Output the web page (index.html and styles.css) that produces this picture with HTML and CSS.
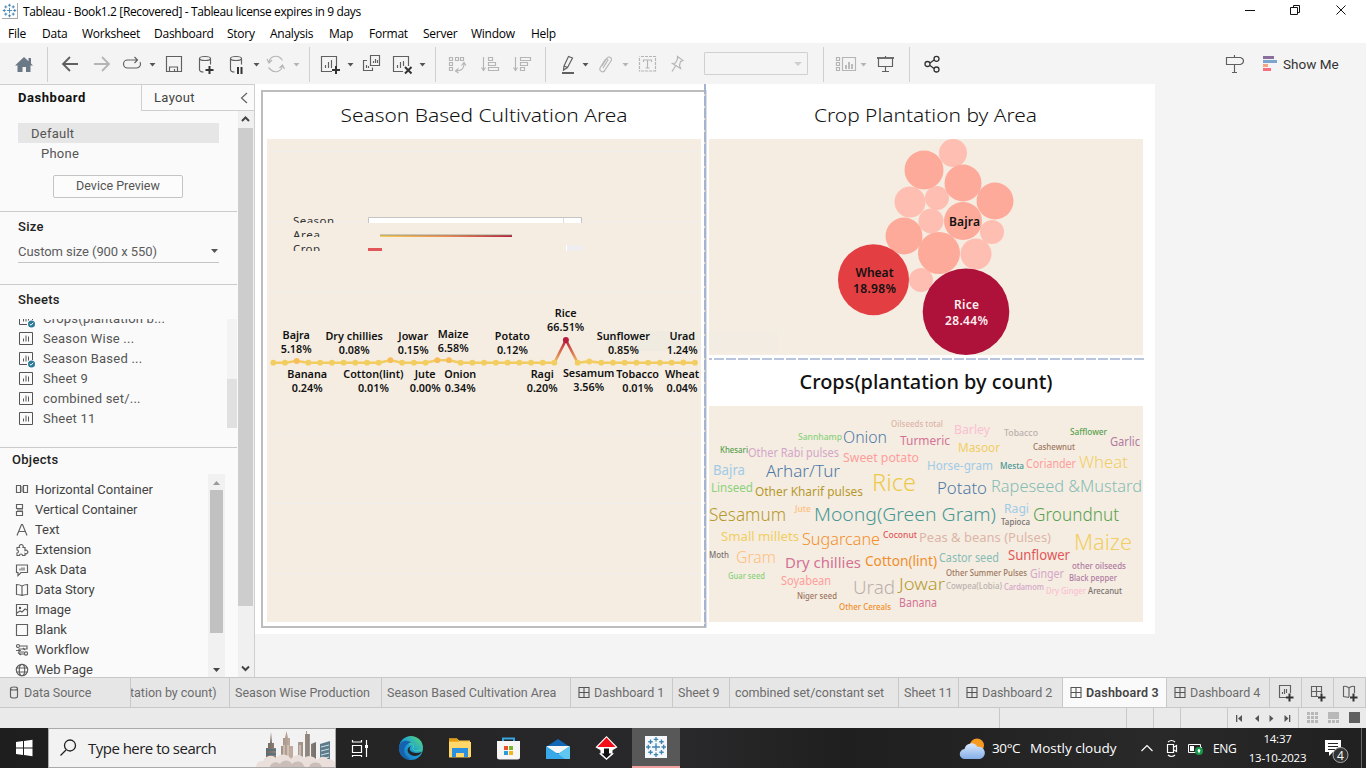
FILE: index.html
```html
<!DOCTYPE html>
<html lang="en">
<head>
<meta charset="utf-8">
<title>Tableau - Book1.2</title>
<link rel="stylesheet" href="styles.css">
</head>
<body>
<svg width="0" height="0" class="defs">
  <defs>
    <symbol id="logo" viewBox="0 0 20 20"><path d="M10 6.5v7M6.5 10h7M10 1v4M8 3h4M10 15v4M8 17h4M1 10h4M3 8v4M15 10h4M17 8v4M5 3.2v4M3 5.2h4M15 3.2v4M13 5.2h4M5 12.8v4M3 14.8h4M15 12.8v4M13 14.8h4" fill="none" stroke="#3f83b0" stroke-width="1.2"/></symbol>
    <symbol id="sheet" viewBox="0 0 14 14"><path d="M.5.5h13v12h-13zM4.500 9.500v-3M7 9.500v-6M9.500 9.500v-5" fill="none" stroke="#555"/></symbol>
    <symbol id="used" viewBox="0 0 17 16"><path d="M8 12.500H.5V.5h13V8M4.500 9.500v-3M7 9.500v-6M9.500 8.500v-4" fill="none" stroke="#555"/><circle cx="12.500" cy="12" r="3.500" fill="#2c7a9b"/><path d="M10.800 12l1.200 1.200 2.200-2.400" fill="none" stroke="#fff"/></symbol>
    <symbol id="dash" viewBox="0 0 12 12"><path d="M1 .5h10v10H1zM1 5.500h10M6 .5v10" fill="none" stroke="#555" stroke-width="1.100"/></symbol>
    <linearGradient id="heat"><stop offset="0" stop-color="#f4cf5b"/><stop offset=".5" stop-color="#ee8c54"/><stop offset="1" stop-color="#b71d3e"/></linearGradient>
    <linearGradient id="peak" x2="0" y2="1"><stop offset="0" stop-color="#b71d3e"/><stop offset=".5" stop-color="#d96d4d"/><stop offset="1" stop-color="#efc368"/></linearGradient>
    <linearGradient id="edge" x1="0" y1="1" x2="1" y2="0"><stop offset="0" stop-color="#1667b8"/><stop offset=".5" stop-color="#1d9fd8"/><stop offset="1" stop-color="#5ee06c"/></linearGradient>
    <linearGradient id="cloudfill" x2="0" y2="1"><stop offset="0" stop-color="#d9e8fb"/><stop offset="1" stop-color="#85aee8"/></linearGradient>
    <linearGradient id="tower" x2="1"><stop offset="0" stop-color="#6f665f"/><stop offset=".5" stop-color="#c2ada0"/><stop offset="1" stop-color="#75706d"/></linearGradient>
  </defs>
</svg>

<header class="titlebar">
  <svg class="app-logo" viewBox="0 0 20 20"><use href="#logo"/></svg>
  <span class="app-title">Tableau - Book1.2 [Recovered] - Tableau license expires in 9 days</span>
  <svg class="window-buttons" viewBox="1230 0 136 23"><path d="M1245 10.500h10M1293.500 7.500v-2h6v7h-2M1290.500 7.500h7v7h-7zM1336.500 5.500l9 9M1345.500 5.500l-9 9" fill="none" stroke="#111"/></svg>
</header>

<nav class="menubar">
  <span class="m1">File</span><span class="m2">Data</span><span class="m3">Worksheet</span><span class="m4">Dashboard</span><span class="m5">Story</span><span class="m6">Analysis</span><span class="m7">Map</span><span class="m8">Format</span><span class="m9">Server</span><span class="m10">Window</span><span>Help</span>
</nav>

<div class="toolbar">
  <svg class="sep" width="48" height="41" viewBox="0 43 48 41"><path d="M15 65.500L24 57l4.500 4.200V58H31v5.600l2 1.900h-2.500V72H26v-5h-3.500v5h-5v-6.500z" fill="#6b7886"/></svg>
  <svg width="70" height="41" viewBox="48 43 70 41"><path d="M78 64H63M70 57l-7 7 7 7" class="ic bold"/><path d="M94 64h15M102 57l7 7-7 7" class="ic bold off"/></svg>
  <svg width="43" height="41" viewBox="118 43 43 41"><path d="M131 60h-3.500a4 4 0 0 0 0 8h9a4 4 0 0 0 3.500-6M130 60h7M134.500 57l3 3-3 3" class="ic"/><path d="M149.500 63h6l-3 3.500z" class="caret"/></svg>
  <svg width="29" height="41" viewBox="161 43 29 41"><path d="M166.500 56.500h15v15h-15zM169.500 71v-4h8v4M174.500 71v-2" class="ic"/></svg>
  <svg width="72" height="41" viewBox="190 43 72 41"><path d="M199.500 58.500v11q0 2.500 4 2.500M210.500 58.500v6" class="ic"/><ellipse cx="205" cy="58.500" rx="5.500" ry="2" class="ic"/><path d="M209.500 66v8M205.500 70h8" class="ic plus"/><path d="M230.500 58.500v11q0 2.500 4 2.500M241.500 58.500v6" class="ic"/><ellipse cx="236" cy="58.500" rx="5.500" ry="2" class="ic"/><path d="M238 67v7M241.500 67v7" class="ic plus"/><path d="M253.500 63h6l-3 3.500z" class="caret"/></svg>
  <svg class="sep" width="48" height="41" viewBox="262 43 48 41"><path d="M269 62a7 7 0 0 1 12-3.500l1.500 2M282.500 66a7 7 0 0 1-12 3.500l-2-2M267 59l2 4 3-3M284.500 69l-2-4-3 3" class="ic off"/><path d="M293.500 63h6l-3 3.500z" class="caret off-fill"/></svg>
  <svg class="sep" width="126" height="41" viewBox="310 43 126 41"><path d="M332 71.500h-10.500v-15h15V66M325.500 68v-3M328.500 68v-6M331.500 68v-8" class="ic"/><path d="M336 66v8M332 70h8" class="ic plus"/><path d="M347.500 63h6l-3 3.500z" class="caret"/><path d="M371.500 55.500h8v10h-9v-10zM367 60.500h-3.500v10h9v-3M373.500 63v-2M375.500 63v-4M377.500 63v-3M366.500 68v-3M368.500 68v-2" class="ic"/><path d="M403 71.500h-9.500v-15h15V66M397.500 68v-3M400.500 68v-6M403.500 66v-5" class="ic"/><path d="M405 67l6.500 6.500M411.500 67l-6.500 6.500" class="ic plus"/><path d="M419.500 63h6l-3 3.500z" class="caret"/></svg>
  <svg class="sep" width="110" height="41" viewBox="436 43 110 41"><path d="M449.500 57.500h3v3h-3zM455.500 57.500h3v3h-3zM460.500 57.500h3v3h-3zM449.500 62.500h3v3h-3zM449.500 67.500h3v3h-3zM464 64q0 7-8 7M461.500 65.500l2.500-3 2 3M458.500 68.500l-3 2.500 3 2M483.500 57v12M481.500 67.500l2 3 2-3M488.500 57.500h4v3h-4zM488.500 62.500h7v3h-7zM488.500 67.500h10v3h-10zM515.500 57v12M513.500 67.500l2 3 2-3M520.500 57.500h10v3h-10zM520.500 62.500h7v3h-7zM520.500 67.500h4v3h-4z" class="ic off"/></svg>
  <svg width="158" height="41" viewBox="546 43 158 41"><path d="M564 66l4.500-9.500 4 1.500-5 9.500-4 2.500zM564 66l3.500 1.500" class="ic"/><path d="M562 73h12" class="ic plus2"/><path d="M582.500 63h6l-3 3.500z" class="caret"/><path d="M602 66l5-8a2.500 2.500 0 0 1 4 3l-6 9a2.500 2.500 0 0 1-5-2l5-8q2-2 3 0l-5 8M640 56.500h15.500v14.500h-16V56.500" class="ic off"/><path d="M643.500 62v-2h8v2M647.500 60v8M645.500 68h4" class="ic off"/><path d="M640 56.500h15M640 71h15M639.500 57v14M655.500 57v14" stroke="#f4f4f4" stroke-width="1.500" stroke-dasharray="1 3"/><path d="M622.500 63h6l-3 3.500z" class="caret off-fill"/><path d="M677.500 56.500l5.500 4-2.500 1-1 4 1 3-8-5 3-.5 2-4zM675.500 66l-3.500 5.500" class="ic off"/></svg>
  <div class="combo"><i></i></div>
  <svg class="sep" width="16" height="41"></svg>
  <svg class="sep" width="86" height="41" viewBox="824 43 86 41"><path d="M836.500 57.500h3v3h-3zM836.500 62.500h3v3h-3zM836.500 67.500h3v3h-3zM842.500 57.500h13v13h-13z" class="ic off"/><path d="M846 69v-4M849 69v-7M852 69v-5" class="ic off bold"/><path d="M860.500 63h6l-3 3.500z" class="caret off-fill"/><path d="M878.500 58v8.500h14V58M885.500 56v2M885.500 67v4M882 71.500h7" class="ic"/><path d="M877 58h17" class="ic bold"/></svg>
  <svg width="60" height="41" viewBox="910 43 60 41"><path d="M930 63l4-3M930 65.500l4 3" class="ic dark"/><circle cx="927.500" cy="64" r="2.500" class="ic dark"/><circle cx="936.500" cy="58.800" r="2.500" class="ic dark"/><circle cx="936.500" cy="69.500" r="2.500" class="ic dark"/></svg>
  <svg class="push" width="62" height="41" viewBox="1220 43 62 41"><path d="M1226.500 57.500h14q3 1 3 3.500t-3 3.500h-14zM1234.500 55v2M1234.500 65v7M1232 72.500h5" class="ic"/><path d="M1263 56h11v3h-11z" fill="#8a6f9c"/><path d="M1263 60h14v3h-14z" fill="#7da3cf"/><path d="M1263 64h5v3h-5z" fill="#f3a683"/><path d="M1263 68h8v3h-8z" fill="#f76e7f"/></svg>
  <span class="showme">Show Me</span>
</div>

<div class="workspace">
  <aside class="side">
    <div class="side-tabs"><b>Dashboard</b><div class="layout-tab"><span>Layout</span><svg width="8" height="12" viewBox="0 0 8 12"><path d="M7 1L1.500 6 7 11" class="ic"/></svg></div></div>
    <div class="side-body">
      <div class="side-main">
        <section class="devices">
          <div class="default">Default</div>
          <div class="phone">Phone</div>
          <div class="preview">Device Preview</div>
        </section>
        <section class="size">
          <h3>Size</h3>
          <div class="select"><span>Custom size (900 x 550)</span><svg width="8" height="5"><path d="M0 0h7L3.500 4z" fill="#555"/></svg></div>
        </section>
        <section class="sheets">
          <h3>Sheets</h3>
          <div class="sheet-area">
            <ul>
              <li><svg width="17" height="16"><use href="#used"/></svg>Crops(plantation b...</li>
              <li><svg width="14" height="14"><use href="#sheet"/></svg>Season Wise ...</li>
              <li><svg width="17" height="16"><use href="#used"/></svg>Season Based ...</li>
              <li><svg width="14" height="14"><use href="#sheet"/></svg>Sheet 9</li>
              <li><svg width="14" height="14"><use href="#sheet"/></svg>combined set/...</li>
              <li><svg width="14" height="14"><use href="#sheet"/></svg>Sheet 11</li>
            </ul>
            <div class="mini-scroll"><i></i></div>
          </div>
        </section>
        <section class="objects">
          <h3>Objects</h3>
          <div class="object-area">
            <ul>
              <li><svg viewBox="0 0 14 14"><path d="M1.500 2.500h4v7h-4zM8.500 2.500h4v7h-4z" class="ic"/><path d="M6 3h2v6H6z" fill="#aaa"/></svg>Horizontal Container</li>
              <li><svg viewBox="0 0 14 14"><path d="M1.500 1.500h6v4h-6zM1.500 8.500h6v4h-6z" class="ic"/><path d="M2 6h6v2H2z" fill="#aaa"/></svg>Vertical Container</li>
              <li><svg viewBox="0 0 14 14"><path d="M2 12.500L6.500 1.500h1L12 12.500M4 8.500h6" class="ic"/></svg>Text</li>
              <li><svg viewBox="0 0 14 14"><path d="M2 4.500h2.500a2 2 0 1 1 3.500 0h2v3a1.800 1.800 0 1 1 0 3v2H7.500a1.500 1.500 0 0 0-3 0H2V10a1.500 1.500 0 1 0 0-3z" class="ic"/></svg>Extension</li>
              <li><svg viewBox="0 0 14 14"><path d="M1.500 2h11v7.500H6l-3 3v-3H1.500z" class="ic"/><path d="M5 7.500v-2M7 7.500v-3M9 7.500v-3" class="ic"/></svg>Ask Data</li>
              <li><svg viewBox="0 0 14 14"><path d="M1.500 1.500q3 0 5.500 1.500 2.500-1.500 5.500-1.500v10q-3 0-5.500 1-2.500-1-5.500-1zM7 3v9" class="ic"/></svg>Data Story</li>
              <li><svg viewBox="0 0 14 14"><path d="M1.500 1.500h11v11h-11zM2 10l3-2 2 1 3-3 2 1" class="ic"/><circle cx="5" cy="5" r="1.200" fill="#555"/></svg>Image</li>
              <li><svg viewBox="0 0 14 14"><path d="M1.500 1.500h11v11h-11z" class="ic"/></svg>Blank</li>
              <li><svg viewBox="0 0 14 14"><path d="M5 3h7v3H4v3h5M9 11H4" class="ic"/><circle cx="3" cy="3" r="1.500" class="ic"/><circle cx="11" cy="10.500" r="1.600" class="ic"/><path d="M1 7.500h5M3 9.500l3 2.500M8 5l2 2" class="ic"/></svg>Workflow</li>
              <li><svg viewBox="0 0 14 14"><circle cx="7" cy="7" r="5.700" class="ic"/><ellipse cx="7" cy="7" rx="2.700" ry="5.700" class="ic"/><path d="M1 5h12M1 9h12" class="ic"/></svg>Web Page</li>
            </ul>
            <div class="obj-scroll"><svg width="17" height="16"><path d="M5 11h7L8.500 7z" fill="#999"/></svg><i></i><svg width="17" height="17"><path d="M5 7h7l-3.500 4z" fill="#444"/></svg></div>
          </div>
        </section>
      </div>
      <div class="main-scroll"><svg width="15" height="17"><path d="M4 10l3.500-3.500L11 10" fill="none" stroke="#444" stroke-width="2"/></svg><i></i><svg width="15" height="17"><path d="M4 6.500l3.500 3.500L11 6.500" fill="none" stroke="#444" stroke-width="2"/></svg></div>
    </div>
  </aside>

  <main class="canvas">
    <div class="dashboard">
      <svg class="zone-left" width="454" height="550" viewBox="255 84 454 550">
        <path d="M262 91h443.500v536H262z" fill="#fff" stroke="#bdbdbd" stroke-width="2"/>
        <path d="M705 84v543" stroke="#a3b3d0" stroke-width="2" stroke-dasharray="10 2"/>
        <text x="340.500" y="122" textLength="287" lengthAdjust="spacingAndGlyphs" class="ztitle">Season Based Cultivation Area</text>
        <path d="M267 139h434v483H267z" fill="#f5ede2"/>
        <path d="M268 151.500h433M268 221.500h433M268 292.500h433M268 362.500h433M268 433.500h433M268 503.500h433M268 573.500h433" stroke="#f1efed"/>
        <path d="M607 331h94v20h-94z" fill="#eeeae0" opacity=".7"/>
        <svg x="290" y="217" width="300" height="6" viewBox="290 217 300 6"><text x="293" y="225" textLength="41" class="legend">Season</text><path d="M368.500 230v-12.500h213V230z" fill="#fff" stroke="#c4c4c4"/><path d="M563.500 218v6" stroke="#ddd"/></svg>
        <svg x="290" y="231" width="300" height="6" viewBox="290 231 300 6"><text x="293" y="239" textLength="27" class="legend">Area</text><path d="M380 235h132v2H380z" fill="url(#heat)"/><path d="M380 235h132" stroke="#8d8a75" stroke-width=".8"/></svg>
        <svg x="290" y="245" width="300" height="6" viewBox="290 245 300 6"><text x="293" y="253" textLength="27" class="legend">Crop</text><path d="M368 248h14v3h-14z" fill="#e15759"/><path d="M567 245h16v6h-16z" fill="#eeeef0"/><path d="M566.500 245v6" stroke="#fff"/></svg>
        <g fill="none" stroke-width="2.600" stroke-linejoin="round">
          <path d="M273.300 362.700h11.700l11.700-1.700 11.700 1.700h70.300l11.700-2.500 11.700 2.500h23.400l11.700-2.500h11.700l11.700 2.500h94M577.600 362.700l11.700-1.300 11.700 1.300h94" stroke="#f3cb61"/>
          <path d="M554.500 362.700L565.900 340l11.700 22.700" stroke="url(#peak)"/>
        </g>
        <path d="M273.300 362.700h.01M285 362.700h.01M308.400 362.700h.01M320.100 362.700h.01M331.900 362.700h.01M343.600 362.700h.01M355.300 362.700h.01M367 362.700h.01M378.700 362.700h.01M402.100 362.700h.01M413.900 362.700h.01M425.600 362.700h.01M460.700 362.700h.01M472.400 362.700h.01M484.100 362.700h.01M495.900 362.700h.01M507.600 362.700h.01M519.300 362.700h.01M531 362.700h.01M542.700 362.700h.01M554.400 362.700h.01M577.600 362.700h.01M589.300 361.500h.01M601.300 362.700h.01M613 362.700h.01M624.700 362.700h.01M636.400 362.700h.01M648.100 362.700h.01M659.900 362.700h.01M671.600 362.700h.01M683.300 362.500h.01M695 362.700h.01" stroke="#f2ce61" stroke-width="5.800" stroke-linecap="round"/>
        <path d="M296.700 361h.01M390.400 360.200h.01M437.300 360.200h.01M449 360.200h.01" stroke="#f7bd59" stroke-width="5.800" stroke-linecap="round"/>
        <circle cx="565.900" cy="340" r="3" fill="#b71d3e"/>
        <g class="mark" transform="translate(-.3 -.7)">
          <text x="296.500" y="339.500">Bajra</text><text x="296.500" y="354">5.18%</text>
          <text x="354.500" y="340.500">Dry chillies</text><text x="354.500" y="355">0.08%</text>
          <text x="413.500" y="340.500">Jowar</text><text x="413.500" y="355">0.15%</text>
          <text x="453.500" y="338.500">Maize</text><text x="453.500" y="353">6.58%</text>
          <text x="512.700" y="340.500">Potato</text><text x="512.700" y="355">0.12%</text>
          <text x="566" y="317.500">Rice</text><text x="566" y="332">66.51%</text>
          <text x="623.700" y="340.500">Sunflower</text><text x="623.700" y="355">0.85%</text>
          <text x="682.500" y="340.500">Urad</text><text x="682.500" y="355">1.24%</text>
          <text x="307.500" y="378.500">Banana</text><text x="307.500" y="393">0.24%</text>
          <text x="373.700" y="378.500">Cotton(lint)</text><text x="373.700" y="393">0.01%</text>
          <text x="425.500" y="378.500">Jute</text><text x="425.500" y="393">0.00%</text>
          <text x="460.500" y="378.500">Onion</text><text x="460.500" y="393">0.34%</text>
          <text x="542.500" y="378.500">Ragi</text><text x="542.500" y="393">0.20%</text>
          <text x="589" y="377.500">Sesamum</text><text x="589" y="392">3.56%</text>
          <text x="638" y="378.500">Tobacco</text><text x="638" y="393">0.01%</text>
          <text x="682.300" y="378.500">Wheat</text><text x="682.300" y="393">0.04%</text>
        </g>
      </svg>
      <div class="zone-right">
        <svg width="446" height="275" viewBox="709 84 446 275">
          <text x="814" y="122" textLength="223" lengthAdjust="spacingAndGlyphs" class="ztitle">Crop Plantation by Area</text>
          <path d="M709 139h434v216H709z" fill="#f5ede2"/>
          <path d="M709 331h69v20h-69z" fill="#f3ece2"/>
          <g fill="#ffbeb2"><circle cx="953" cy="153" r="14"/><circle cx="910" cy="202" r="15.500"/><circle cx="937" cy="198" r="12"/><circle cx="931" cy="221" r="12.500"/><circle cx="992" cy="232" r="12"/><circle cx="976" cy="254" r="15.500"/><circle cx="921" cy="280" r="12"/></g>
          <g fill="#feaa9a"><circle cx="924" cy="170" r="19.500"/><circle cx="963" cy="183" r="18.500"/><circle cx="995" cy="201" r="18.500"/><circle cx="963" cy="221" r="19"/><circle cx="904" cy="236" r="18.500"/><circle cx="939" cy="253" r="21"/></g>
          <circle cx="873.500" cy="279.700" r="35.500" fill="#e33f43"/><circle cx="966" cy="311.700" r="43.300" fill="#ae123a"/>
          <g class="bubble"><text x="964.500" y="226" textLength="31">Bajra</text><text x="874.500" y="277" textLength="38">Wheat</text><text x="874.500" y="293" textLength="43">18.98%</text><text x="966.500" y="309" textLength="25" class="lite">Rice</text><text x="966.500" y="325" textLength="43" class="lite">28.44%</text></g>
          <path d="M702 358.500h444" stroke="#b9c6de" stroke-dasharray="10 2"/>
        </svg>
        <svg width="446" height="275" viewBox="709 359 446 275">
          <path d="M702 359.500h444" stroke="#b9c6de" stroke-dasharray="10 2"/>
          <text x="799.500" y="389" textLength="253" lengthAdjust="spacingAndGlyphs" class="ztitle strong">Crops(plantation by count)</text>
          <path d="M709 406h434v216H709z" fill="#f5ede2"/>
          <g id="words" class="words"></g>
        </svg>
      </div>
    </div>
  </main>
</div>

<div class="tabs">
  <div class="t0"><svg width="10" height="13" viewBox="0 0 10 13"><path d="M1.500 2.500v8q0 1.500 3.500 1.500t3.500-1.500v-8q0-1.500-3.500-1.500T1.500 2.500t3.500 1.500T8.500 2.500" class="ic"/></svg><span>Data Source</span></div>
  <div class="t1"><span>tation by count)</span></div>
  <div class="t2">Season Wise Production</div>
  <div class="t3">Season Based Cultivation Area</div>
  <div class="t4"><svg width="12" height="12"><use href="#dash"/></svg>Dashboard 1</div>
  <div class="t5">Sheet 9</div>
  <div class="t6">combined set/constant set</div>
  <div class="t7">Sheet 11</div>
  <div class="t8"><svg width="12" height="12"><use href="#dash"/></svg>Dashboard 2</div>
  <div class="t9 active"><svg width="12" height="12"><use href="#dash"/></svg>Dashboard 3</div>
  <div class="t10"><svg width="12" height="12"><use href="#dash"/></svg>Dashboard 4</div>
  <div class="t11"><svg width="18" height="18" viewBox="0 0 18 18"><path d="M9 13.500H2.500v-12h11V9M5.500 10V8M7.500 10V5M9.500 9V5" class="ic"/><path d="M12.500 9.500v8M9 13.500h7.500" class="ic plus"/></svg></div>
  <div class="t12"><svg width="18" height="18" viewBox="0 0 18 18"><path d="M9 12.500H2.500v-10h10V9M2.500 7.500h10M7.500 2.500v10" class="ic"/><path d="M12.500 9.500v8M9 13.500h7.500" class="ic plus"/></svg></div>
  <div class="t13"><svg width="18" height="18" viewBox="0 0 18 18"><path d="M8 13.500l-5.500-1v-10q3-1 5.500 1.500 2.500-2.500 5.500-1.500V9M8 4v9" class="ic"/><path d="M12.500 9.500v8M9 13.500h7.500" class="ic plus"/></svg></div>
</div>

<div class="status">
  <div class="s0"></div><div class="s1"></div><div class="s2"></div><div class="s3"></div><div class="s4"></div>
  <div class="s5"><svg width="71" height="20" viewBox="1228 707 71 20"><path d="M1236 714h1.300v7H1236zM1242 714v7l-4-3.500zM1259 714v7l-4-3.500zM1269.500 714v7l4-3.500zM1284.500 714v7l4-3.500zM1289 714h1.300v7H1289z" fill="#555"/></svg></div>
  <svg width="67" height="20" viewBox="1299 708 67 20"><path d="M1307 712h3v3h-3zM1311 712h3v3h-3zM1315 712h3v3h-3zM1307 716h3v3h-3zM1311 716h3v3h-3zM1315 716h3v3h-3zM1307 720h3v3h-3zM1311 720h3v3h-3zM1315 720h3v3h-3zM1328 712h11v7h-11zM1328 720h3v3h-3zM1332 720h3v3h-3zM1336 720h3v3h-3z" fill="#b8b8b8"/><path d="M1349 712h11v11h-11z" fill="#606060"/></svg>
</div>

<footer class="taskbar">
  <svg width="48" height="40" viewBox="0 728 48 40"><path d="M16 742l7-1v6.500h-7zM24 741l8.500-1.200v7.700H24zM16 748.500h7v6.500l-7-1zM24 748.500h8.500v7.700L24 755z" fill="#fff"/></svg>
  <div class="search">
    <svg width="39" height="38" viewBox="49 729 39 38"><circle cx="70" cy="745.500" r="5.500" fill="none" stroke="#222" stroke-width="1.300"/><path d="M66 750l-5.500 5.500" stroke="#222" stroke-width="1.300"/></svg>
    <span>Type here to search</span>
    <svg class="city" width="80" height="38" viewBox="255 729 80 38">
      <path d="M266 760v-12h2v-5h2l1-11 1 11h2v5h2v12zM281 762v-16h2v-8h2l1.500-7 1.500 7h2v8h3v16zM298 760v-18h5v18zM305 760v-26h1v-3h.8v3h3v26zM311 760v-16l5-2v18z" fill="url(#tower)"/>
      <path d="M320 766v-22l10-3v25z" fill="#5f7b8a"/><path d="M321 747l8-2M321 751l8-2M321 755l8-2M321 759l8-2" stroke="#c7e3ef"/>
      <path d="M266 750h10M266 754h10" stroke="#4c7282" stroke-width="1.500"/><path d="M284 745v14M288 745v14M300 745v12" stroke="#eadbd1"/>
      <path d="M256 767a6 6 0 0 1 7-6 8 8 0 0 1 13-3 9 9 0 0 1 15 1 8 8 0 0 1 13-1 9 9 0 0 1 13 2 7 7 0 0 1 11-1 8 8 0 0 1 7 3v6z" fill="#eadfda"/>
      <path d="M270 767a6 6 0 0 1 10-3 7 7 0 0 1 12 0 7 7 0 0 1 12 2l1 1zM309 767a7 7 0 0 1 13 0z" fill="#cbbdb9"/>
    </svg>
  </div>
  <svg width="48" height="40" viewBox="336 728 48 40"><path d="M352.500 740v2h9v-2M352.500 745.500h9v7h-9zM352.500 757v-1.500h9v1.500M366.500 740v17" fill="none" stroke="#fff" stroke-width="1.200"/><path d="M365 745h3v3h-3z" fill="#fff"/></svg>
  <svg width="54" height="40" viewBox="384 728 54 40"><circle cx="411" cy="748" r="12" fill="url(#edge)"/><path d="M409 743c-6 3-7 12 1 16-7 1-12-6-11-12 1-7 9-8 12-4z" fill="#1762ad"/><path d="M411 746c-4 4 1 9 11 6-3 4-7 5-11 3-4-2-5-7 0-9z" fill="#252525"/><path d="M409 744c3-1 6 1 4 4-1 3 5 4 9 1" fill="none" stroke="#4bd48e" stroke-width="1"/></svg>
  <svg width="46" height="40" viewBox="438 728 46 40"><path d="M449 738.500h8l2 2h11v17h-21z" fill="#f7c64a"/><path d="M449 742h22v15h-22z" fill="#ffd76a"/><path d="M449 738.500h8l1.500 3H449z" fill="#e29b13"/><path d="M452 748h16v9h-4v-4h-8v4h-4z" fill="#2b90df"/></svg>
  <svg width="50" height="40" viewBox="484 728 50 40"><path d="M503 742v-3.500h11v3.500" fill="none" stroke="#36a5e0" stroke-width="2"/><path d="M497 741h23v16q0 2.500-2.500 2.500h-18q-2.500 0-2.500-2.500z" fill="#f6f6f6"/><path d="M504 746h4v4h-4z" fill="#e6502c"/><path d="M509 746h4v4h-4z" fill="#78b82a"/><path d="M504 751h4v4h-4z" fill="#249fd7"/><path d="M509 751h4v4h-4z" fill="#f5b51c"/></svg>
  <svg width="48" height="40" viewBox="534 728 48 40"><path d="M546 747l12-8 12 8v12h-24z" fill="#1267b7"/><path d="M547 746h22v7h-22z" fill="#f6f6f6"/><path d="M546 746l12 8 12-8v13h-24z" fill="#38a9e8"/><path d="M558 754l12-8v13h-5z" fill="#60c7f2"/></svg>
  <svg width="50" height="40" viewBox="582 728 50 40"><path d="M606.500 736l11 11.300-5 3v3l1.500.2-7.500 6.500-7.500-6.500 1.500-.2v-3l-5-3z" fill="#fff"/><path d="M606.500 737.500l9 9.500h-18z" fill="#f20e18"/><path d="M604 748.500h5v5h2.500l-5 4.800-5-4.800h2.500z" fill="#111"/></svg>
  <div class="task-active"><svg width="22" height="22" viewBox="0 0 20 20"><path d="M0 0h20v20H0z" fill="#f4f7fb"/><use href="#logo"/></svg></div>
  <svg class="push" width="32" height="40" viewBox="955 728 32 40"><circle cx="977" cy="745.500" r="7" fill="#f59b22"/><path d="M965 759a5 5 0 0 1-.5-10 7 7 0 0 1 13-2 6 6 0 0 1 2.500 12z" fill="url(#cloudfill)"/></svg>
  <span class="temp">30°C</span><span class="cloudy">Mostly cloudy</span>
  <svg width="83" height="40" viewBox="1130 728 83 40"><path d="M1141.500 751l5.500-5.500 5.500 5.500M1168 742q3.500-3 7 0M1168 755q3.500 3 7 0M1167.500 744.500h6v8h-6zM1174 747l2.500-1.500v6l-2.500-1.500" fill="none" stroke="#fff" stroke-width="1.200"/><path d="M1188.500 744.500h12v8h-12zM1201.500 747v3" fill="none" stroke="#fff"/><path d="M1190 746h4v5h-4z" fill="#fff"/><circle cx="1199" cy="751" r="4" fill="#14984a"/><path d="M1199 748.500l1.500 2-1.500 3-1.500-3z" fill="#fff"/></svg>
  <span class="lang">ENG</span>
  <div class="clock"><span>14:37</span><span class="date">13-10-2023</span></div>
  <svg width="52" height="40" viewBox="1314 728 52 40"><path d="M1325 740h16v12h-8l-4 4v-4h-4z" fill="#fff"/><path d="M1328 743.500h10M1328 746.500h10M1328 749.500h7" stroke="#252525"/><circle cx="1340.500" cy="755" r="7.500" fill="#333" stroke="#aaa"/><text x="1340.500" y="759.500" class="count">4</text><path d="M1361.500 728v40" stroke="#666"/></svg>
</footer>
<script src="words.js"></script>
</body>
</html>
```
FILE: words.js
```js
// Word cloud entries: text, left, right, baseline, font size, colour
const words = [
  ["Oilseeds total", 891, 943, 427, 8, "#dcb5a8"], ["Barley", 954, 990, 434, 12.5, "#fabfd2"],
  ["Tobacco", 1004, 1038, 436, 9, "#bab0ac"], ["Safflower", 1070, 1107, 435, 8, "#59a14f"],
  ["Turmeric", 900, 950, 444.5, 12.5, "#d37295"], ["Garlic", 1110, 1140, 446, 12, "#b07aa1"],
  ["Sannhamp", 798, 842, 440, 9, "#8cd17d"], ["Onion", 843, 887, 443, 16.5, "#4e79a7"],
  ["Masoor", 958, 1000, 452, 13, "#f1ce63"], ["Cashewnut", 1033, 1075, 450, 8, "#9d7660"],
  ["Khesari", 720, 748, 453, 8, "#59a14f"], ["Other Rabi pulses", 748, 839, 456.5, 12, "#d4a6c8"],
  ["Sweet potato", 843, 919, 462, 12.5, "#ff9d9a"], ["Bajra", 713, 745, 475, 13.5, "#a0cbe8"],
  ["Arhar/Tur", 766, 840, 477, 17, "#4e79a7"], ["Horse-gram", 927, 993, 470, 12, "#a0cbe8"],
  ["Mesta", 1000, 1024, 469, 8, "#499894"], ["Coriander", 1026, 1076, 468, 12, "#ff9d9a"],
  ["Wheat", 1079, 1128, 468, 17, "#f1ce63"], ["Linseed", 711, 753, 492, 12.5, "#8cd17d"],
  ["Other Kharif pulses", 755, 863, 496, 12.5, "#b6992d"], ["Rice", 872, 916, 491, 23, "#edc948"],
  ["Potato", 937, 987, 494, 16, "#4e79a7"], ["Rapeseed &Mustard", 991, 1142, 492, 16.5, "#86bcb6"],
  ["Sesamum", 709, 786, 521, 17.5, "#b6992d"], ["Jute", 795, 811, 512, 8, "#ffbe7d"],
  ["Moong(Green Gram)", 814, 996, 521, 19, "#499894"], ["Ragi", 1004, 1029, 512.5, 13, "#a0cbe8"],
  ["Tapioca", 1001, 1030, 525, 8, "#79706e"], ["Groundnut", 1033, 1119, 521, 17.5, "#59a14f"],
  ["Small millets", 721, 799, 541, 13, "#f1ce63"], ["Sugarcane", 802, 880, 545, 17, "#f28e2b"],
  ["Coconut", 883, 917, 538, 9, "#e15759"], ["Peas & beans (Pulses)", 919, 1051, 542, 13, "#dcb5a8"],
  ["Maize", 1074, 1132, 550, 22.5, "#f1ce63"], ["Moth", 709, 729, 558, 8.5, "#79706e"],
  ["Gram", 736, 776, 563, 16, "#ffbe7d"], ["Dry chillies", 785, 861, 568, 15, "#d37295"],
  ["Cotton(lint)", 865, 937, 566, 13.5, "#f28e2b"], ["Castor seed", 939, 999, 562, 12.5, "#86bcb6"],
  ["Sunflower", 1008, 1070, 560, 14, "#e15759"], ["other oilseeds", 1072, 1126, 569, 8, "#b07aa1"],
  ["Guar seed", 728, 765, 579, 8, "#8cd17d"], ["Soyabean", 781, 831, 585, 12, "#ff9d9a"],
  ["Other Summer Pulses", 946, 1027, 576, 8, "#9d7660"], ["Ginger", 1030, 1064, 577.5, 12.5, "#d4a6c8"],
  ["Black pepper", 1069, 1117, 581, 8, "#b07aa1"], ["Niger seed", 797, 837, 599, 8, "#9d7660"],
  ["Urad", 853, 895, 594, 18.5, "#bab0ac"], ["Jowar", 899, 945, 590, 16.5, "#b6992d"],
  ["Cowpea(Lobia)", 946, 1002, 589, 8.5, "#bab0ac"], ["Cardamom", 1004, 1044, 590, 8.5, "#d4a6c8"],
  ["Dry Ginger", 1046, 1086, 594, 8.5, "#fabfd2"], ["Arecanut", 1088, 1122, 594, 8.5, "#79706e"],
  ["Other Cereals", 839, 891, 610, 8, "#f28e2b"], ["Banana", 899, 937, 607, 12, "#d37295"]
];
const cloud = document.getElementById("words");
for (const [label, left, right, base, size, color] of words) {
  const t = document.createElementNS("http://www.w3.org/2000/svg", "text");
  t.setAttribute("x", left);
  t.setAttribute("y", base);
  t.setAttribute("font-size", size);
  t.setAttribute("fill", color);
  t.setAttribute("textLength", right - left);
  t.setAttribute("lengthAdjust", "spacingAndGlyphs");
  if (size < 10) t.setAttribute("class", "small");
  else if (size < 16) t.setAttribute("class", "medium");
  t.textContent = label;
  cloud.append(t);
}
```
FILE: styles.css
```css
* { box-sizing: border-box; }
body { margin: 0; width: 1366px; height: 768px; overflow: hidden; background: #f4f4f4; font-family: Roboto, "Liberation Sans", sans-serif; font-size: 13px; color: #444; display: flex; flex-direction: column; }
svg { display: block; flex: none; }
.defs { position: absolute; }
ul { list-style: none; margin: 0; padding: 0; }
h3 { margin: 0; font-size: 13px; font-weight: 500; color: #222; letter-spacing: .3px; line-height: 16px; }
span { white-space: nowrap; }

.ic { fill: none; stroke: #606060; stroke-width: 1.15; }
.bold { stroke-width: 1.8; }
.dark { stroke: #333; stroke-width: 1.3; }
.plus { stroke: #333; stroke-width: 2; }
.plus2 { stroke-width: 2; }
.off { stroke: #b5b5b5; }
.caret { fill: #555; }
.off-fill { fill: #b5b5b5; }
.push { margin-left: auto; }

.titlebar { height: 23px; flex: none; background: #fff; display: flex; align-items: center; padding-left: 2px; }
.app-logo { width: 16px; height: 16px; border-right: 1px solid #aaa; border-bottom: 1px solid #aaa; margin-top: -1px; }
.app-title { margin-left: 5px; font: 12px "Open Sans", sans-serif; color: #000; letter-spacing: -.37px; }
.window-buttons { width: 136px; height: 23px; margin-left: auto; }

.menubar { height: 20px; flex: none; background: #fff; display: flex; padding-left: 8px; font: 12px/21px "Open Sans", sans-serif; letter-spacing: -.25px; color: #000; }
.m1 { width: 34px; } .m2 { width: 40px; } .m3 { width: 72px; } .m4 { width: 73px; } .m5 { width: 43px; }
.m6 { width: 59px; } .m7 { width: 40px; } .m8 { width: 54px; } .m9 { width: 48px; } .m10 { width: 60px; }

.toolbar { height: 41px; flex: none; display: flex; align-items: center; background: #f4f4f4; }
.toolbar .sep { background: linear-gradient(#d0d0d0, #d0d0d0) right 4px / 1px 35px no-repeat; }
.combo { width: 104px; height: 23px; border: 1px solid #d0d0d0; border-radius: 1px; display: flex; justify-content: flex-end; align-items: center; padding-right: 5px; }
.combo i { border: 4px solid transparent; border-top-color: #cfcfcf; border-bottom: 0; }
.showme { width: 84px; padding-left: 1px; font-size: 13.5px; color: #333; }

.workspace { height: 593px; flex: none; display: flex; }
.side { width: 255px; flex: none; background: #fafafa; border-top: 1px solid #cfcfcf; border-right: 1px solid #cfcfcf; display: flex; flex-direction: column; }
.side-tabs { height: 26px; display: flex; }
.side-tabs b { width: 141px; padding-left: 18px; font-weight: 700; line-height: 25px; color: #111; letter-spacing: .55px; }
.layout-tab { flex: 1; border-left: 1px solid #cfcfcf; border-bottom: 1px solid #cfcfcf; display: flex; align-items: center; justify-content: space-between; padding: 0 6px 0 12px; letter-spacing: .35px; }
.side-body { flex: 1; display: flex; height: 566px; }
.side-main { width: 237px; margin-right: 1px; flex: none; display: flex; flex-direction: column; }
section { border-bottom: 1px solid #cbcbcb; flex: none; }
.devices { height: 101px; padding: 12px 18px 0; color: #555; letter-spacing: .25px; }
.default { background: #e6e6e6; height: 20px; line-height: 21px; padding-left: 13px; width: 201px; }
.phone { line-height: 21px; padding-left: 23px; height: 32px; }
.preview { width: 130px; height: 23px; margin-left: 35px; border: 1px solid #c4c4c4; border-radius: 2px; line-height: 20px; text-align: center; font-size: 12.5px; letter-spacing: 0; background: #fcfcfc; }
.size { height: 73px; padding: 7px 18px; }
.select { width: 201px; height: 28px; border-bottom: 1px solid #c4c4c4; display: flex; justify-content: space-between; align-items: center; padding-top: 5px; color: #5c5c5c; letter-spacing: -.07px; }
.sheets { height: 163px; }
.sheets h3 { padding: 7px 18px 0; height: 34px; }
.sheet-area { height: 109px; display: flex; justify-content: space-between; overflow: hidden; }
.sheet-area ul { margin-top: -11px; padding-left: 19px; }
.sheet-area li { height: 20px; display: flex; color: #555; line-height: 21px; letter-spacing: .22px; }
.sheet-area li svg { margin: 4px 10px 0 0; }
.sheet-area li svg[width="17"] { margin-right: 7px; }
.mini-scroll { width: 10px; background: #f3f3f3; display: flex; align-items: flex-end; }
.mini-scroll i { width: 10px; height: 49px; background: #e0e0e0; }
.objects { flex: 1; border: 0; overflow: hidden; }
.objects h3 { height: 26px; padding: 4px 12px; }
.object-area { display: flex; height: 204px; justify-content: space-between; }
.object-area ul { padding: 6px 0 0 15px; overflow: hidden; }
.object-area li { height: 20px; display: flex; align-items: center; gap: 6px; color: #444; line-height: 20px; letter-spacing: -.05px; }
.object-area li svg { width: 14px; height: 14px; }
.obj-scroll { width: 17px; margin-right: 12px; background: #f1f1f1; display: flex; flex-direction: column; }
.obj-scroll i { width: 13px; height: 143px; margin: 0 2px 28px; background: #c1c1c1; }
.main-scroll { width: 16px; background: #f0f0f0; display: flex; flex-direction: column; }
.main-scroll i { width: 15px; height: 478px; background: #cdcdcd; margin-bottom: 54px; }

.canvas { flex: 1; background: #f4f4f4; }
.dashboard { width: 900px; height: 550px; background: #fff; display: flex; }
.ztitle { font: 300 19px "Noto Sans", "Open Sans", sans-serif; fill: #111; }
.strong { font-weight: 500; fill: #111; }
.legend { font: 11.500px "Noto Sans", sans-serif; fill: #333; }
.mark { font: 600 10.800px "Noto Sans", sans-serif; text-anchor: middle; fill: #111; }
.bubble { font: 600 12px "Noto Sans", sans-serif; text-anchor: middle; fill: #111; }
.bubble .lite { fill: #fbeef0; }
.words { font-family: "Noto Sans", sans-serif; font-weight: 300; }
.words .small { font-weight: 500; }
.words .medium { font-weight: 400; }

.tabs { height: 31px; flex: none; display: flex; border-top: 1px solid #c8c8c8; border-bottom: 1px solid #c8c8c8; background: #e6e6e6; color: #6c6c6c; font-size: 12.500px; letter-spacing: -.03px; }
.tabs > div { display: flex; align-items: center; border-right: 1px solid #c8c8c8; padding-left: 5px; overflow: hidden; white-space: nowrap; flex: none; }
.tabs .active { background: #fafafa; font-weight: 600; color: #444; letter-spacing: .2px; }
.tabs svg { margin-right: 4px; }
.tabs .t0 { width: 131px; padding-left: 9px; } .tabs .t0 svg { margin-right: 5px; }
.tabs .t1 { width: 99px; padding-left: 0; }
.t1 span { margin-left: -1px; }
.t2 { width: 152px; } .t3 { width: 189px; } .tabs .t4 { width: 102px; padding-left: 7px; } .t5 { width: 57px; }
.t6 { width: 169px; } .t7 { width: 60px; } .tabs .t8 { width: 104px; padding-left: 7px; } .tabs .t9 { width: 104px; padding-left: 7px; } .tabs .t10 { width: 103px; padding-left: 7px; }
.tabs .t11 { width: 32px; padding-left: 7px; } .tabs .t12 { width: 32px; padding-left: 7px; } .tabs .t13 { width: 32px; padding-left: 7px; }

.status { height: 20px; flex: none; background: #eaeaea; display: flex; }
.status > div { border-right: 1px solid #c8c8c8; }
.s0 { width: 1000px; } .s1 { width: 127px; } .s2 { width: 27px; } .s3 { width: 27px; } .s4 { width: 47px; } .s5 { width: 71px; }

.taskbar { height: 40px; flex: none; background: linear-gradient(90deg, #1e1e1e, #242425 25%, #29292b 50%, #1f1f1f 62%, #29292a 85%, #202020); display: flex; align-items: center; color: #fff; font-family: "Open Sans", sans-serif; }
.search { width: 288px; height: 40px; background: #f2f2f2; border: 1px solid #aaa; display: flex; align-items: center; color: #222; font-size: 15px; letter-spacing: -.52px; }
.city { margin-left: auto; }
.task-active { width: 48px; height: 40px; background: #585858; border-bottom: 2px solid #f2a0a0; display: flex; align-items: center; justify-content: center; }
.temp { width: 38px; padding-left: 5px; font-size: 13.500px; letter-spacing: -.4px; }
.cloudy { width: 105px; padding-left: 5px; font-size: 13.500px; letter-spacing: 0; }
.lang { width: 30px; font-size: 12px; letter-spacing: -.4px; }
.clock { width: 71px; padding-right: 2px; display: flex; flex-direction: column; align-items: center; font-size: 11.500px; line-height: 19px; letter-spacing: -.25px; }
.count { font: 12px "Open Sans", sans-serif; fill: #fff; text-anchor: middle; }
```
